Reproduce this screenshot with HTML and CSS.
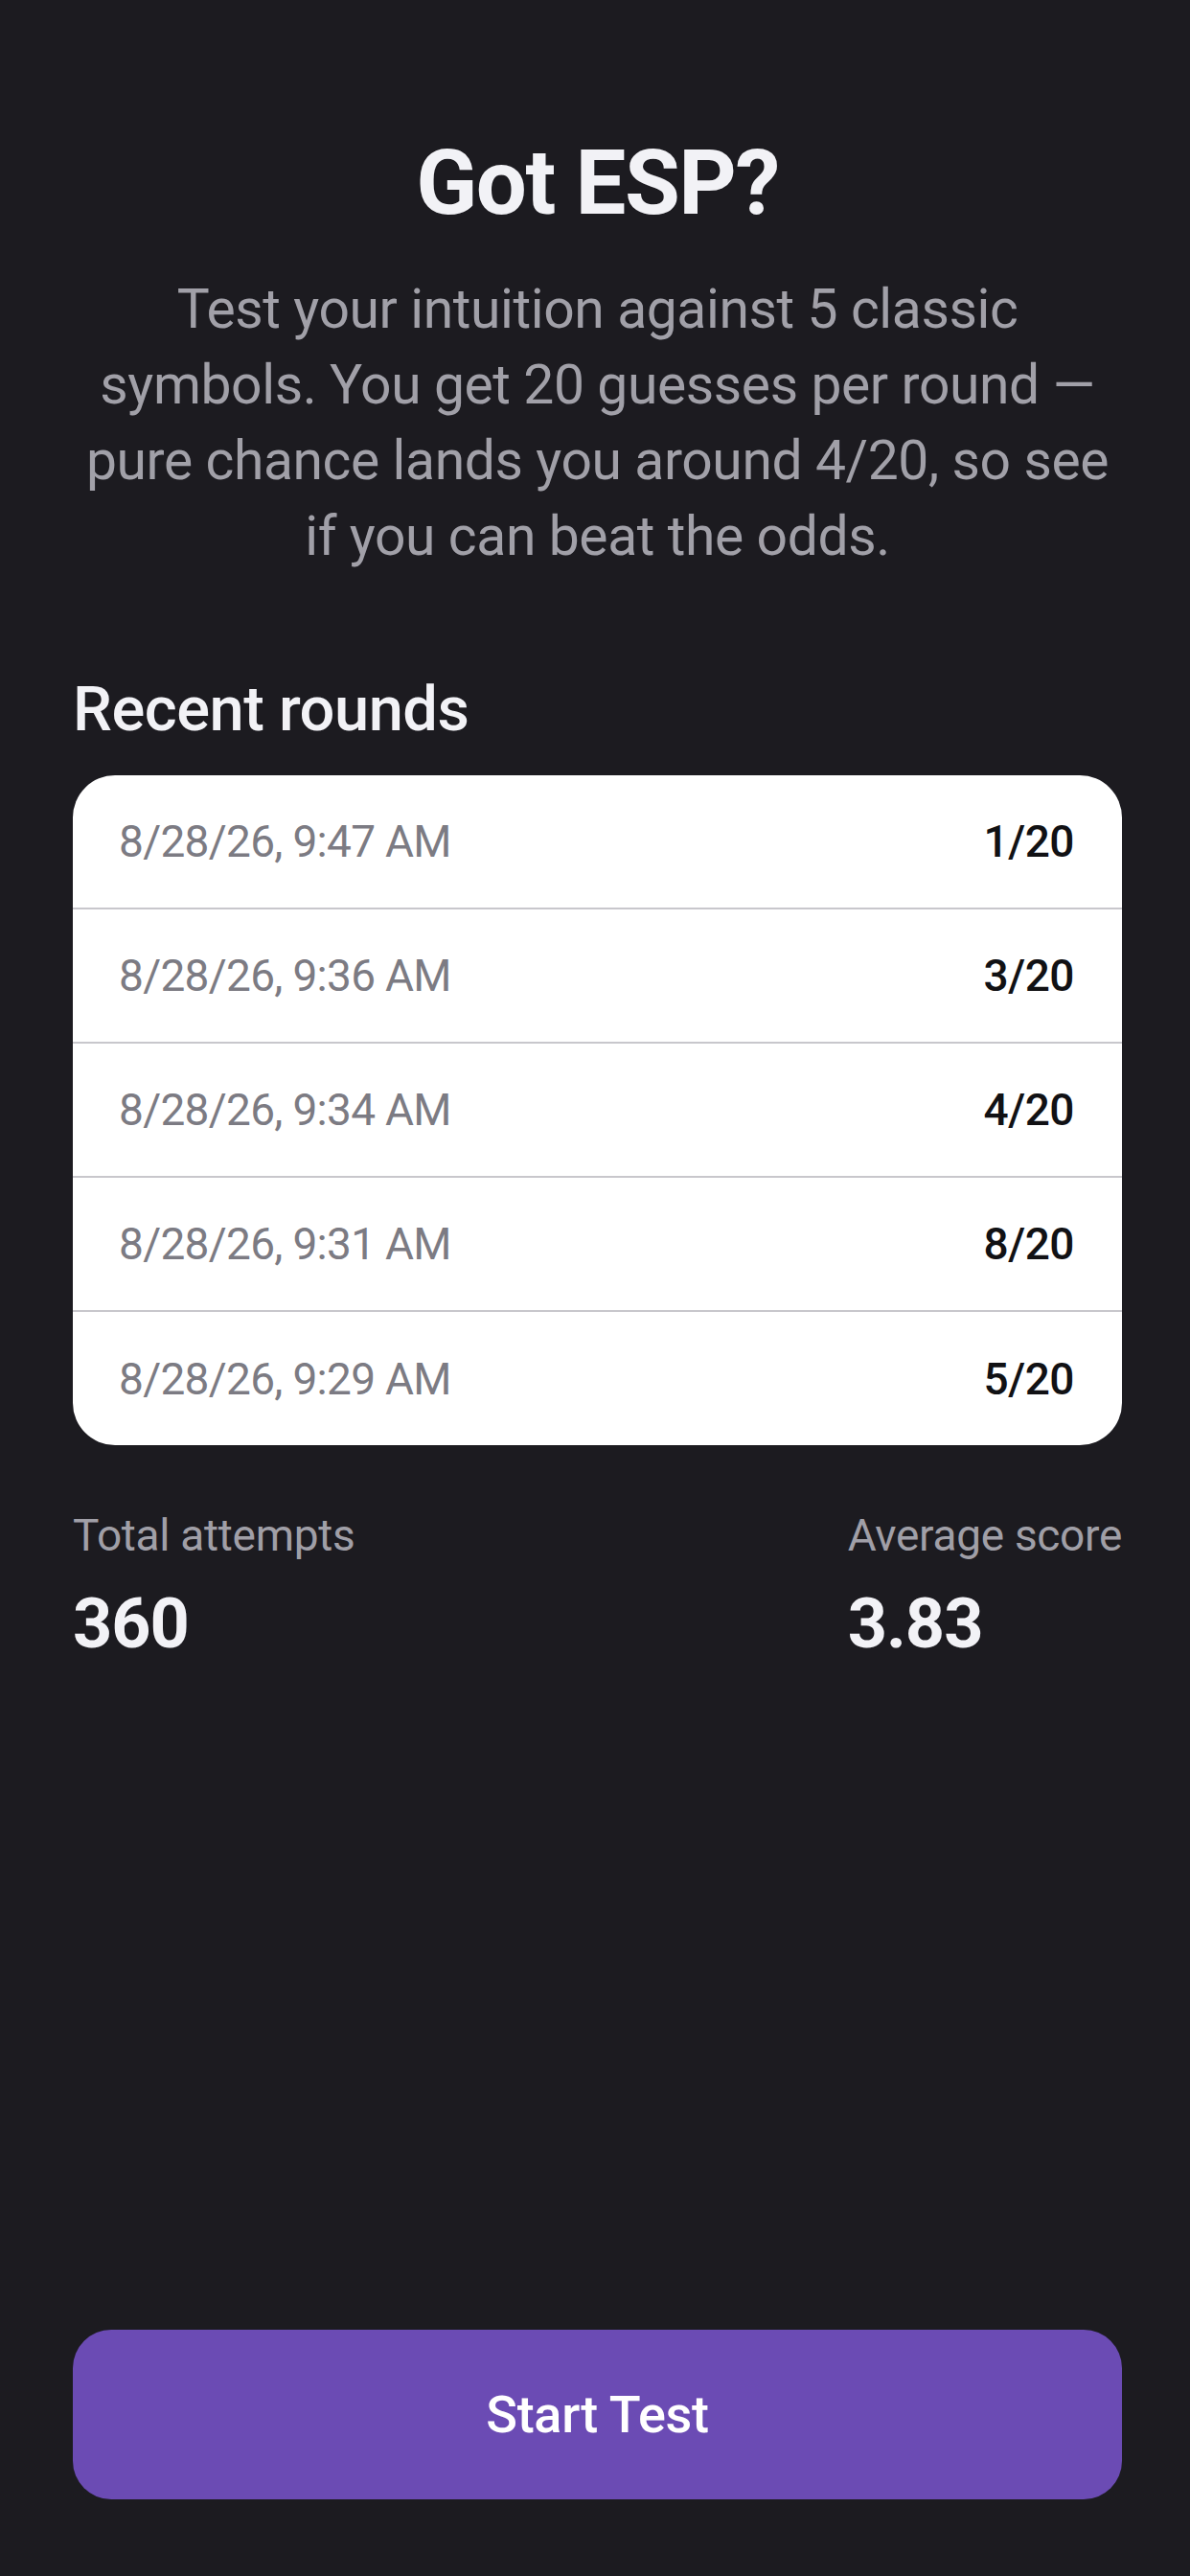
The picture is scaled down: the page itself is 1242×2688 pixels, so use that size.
FILE: index.html
```html
<!DOCTYPE html>
<html>
<head>
    <title>Got ESP?</title>
    <link rel="stylesheet" href="styles.css">
</head>
<body>
    <div class="screen">
        <h1 class="title">Got ESP?</h1>
        <p class="intro">Test your intuition against 5 classic symbols. You get 20 guesses per round — pure chance lands you around 4/20, so see if you can beat the odds.</p>

        <h2 class="section-title">Recent rounds</h2>
        <ul class="rounds">
            <li class="round"><span class="round-date">8/28/26, 9:47 AM</span><span class="round-score">1/20</span></li>
            <li class="round"><span class="round-date">8/28/26, 9:36 AM</span><span class="round-score">3/20</span></li>
            <li class="round"><span class="round-date">8/28/26, 9:34 AM</span><span class="round-score">4/20</span></li>
            <li class="round"><span class="round-date">8/28/26, 9:31 AM</span><span class="round-score">8/20</span></li>
            <li class="round"><span class="round-date">8/28/26, 9:29 AM</span><span class="round-score">5/20</span></li>
        </ul>

        <div class="stats">
            <div class="stat">
                <div class="stat-label">Total attempts</div>
                <div class="stat-value">360</div>
            </div>
            <div class="stat">
                <div class="stat-label">Average score</div>
                <div class="stat-value">3.83</div>
            </div>
        </div>

        <button class="start-btn" type="button">Start Test</button>
    </div>
</body>
</html>
```

FILE: styles.css
```css
body {
    margin: 0;
    padding: 0;
    background-color: #1c1b20;
    font-family: Roboto, "Liberation Sans", sans-serif;
}
.screen {
    box-sizing: border-box;
    height: 2688px;
    padding: 136px 71px 80px 76px;
    display: flex;
    flex-direction: column;
}
.title {
    margin: 0;
    font-size: 94px;
    line-height: 110px;
    font-weight: 700;
    letter-spacing: -1.5px;
    color: #f2f2f6;
    text-align: center;
}
.intro {
    margin: 37px 0 0;
    font-size: 57px;
    line-height: 79px;
    letter-spacing: -0.4px;
    color: #a1a0a8;
    text-align: center;
}
.section-title {
    margin: 101px 0 0;
    font-size: 65px;
    line-height: 80px;
    font-weight: 500;
    letter-spacing: -0.5px;
    color: #f2f2f6;
}
.rounds {
    list-style: none;
    margin: 29px 0 0;
    padding: 0;
    background-color: #ffffff;
    border-radius: 44px;
    overflow: hidden;
}
.round {
    height: 138px;
    padding: 0 50px 0 48px;
    display: flex;
    justify-content: space-between;
    align-items: center;
    border-bottom: 2px solid #c8c7cc;
}
.round:last-child {
    height: 139px;
    border-bottom: none;
}
.round-date {
    font-size: 46px;
    letter-spacing: -0.7px;
    color: #7c7b83;
}
.round-score {
    font-size: 46px;
    font-weight: 500;
    letter-spacing: -0.5px;
    color: #111114;
}
.stats {
    margin-top: 66px;
    display: flex;
    justify-content: space-between;
}
.stat-label {
    font-size: 46px;
    line-height: 56px;
    letter-spacing: -0.3px;
    color: #a09fa7;
}
.stat-value {
    margin-top: 23px;
    font-size: 72px;
    line-height: 84px;
    font-weight: 700;
    letter-spacing: -1px;
    color: #f2f2f6;
}
.start-btn {
    margin-top: auto;
    height: 177px;
    border: none;
    border-radius: 40px;
    background-color: #6b4bb4;
    color: #ffffff;
    font-family: Roboto, "Liberation Sans", sans-serif;
    font-size: 54px;
    font-weight: 500;
    letter-spacing: -0.3px;
}
```
